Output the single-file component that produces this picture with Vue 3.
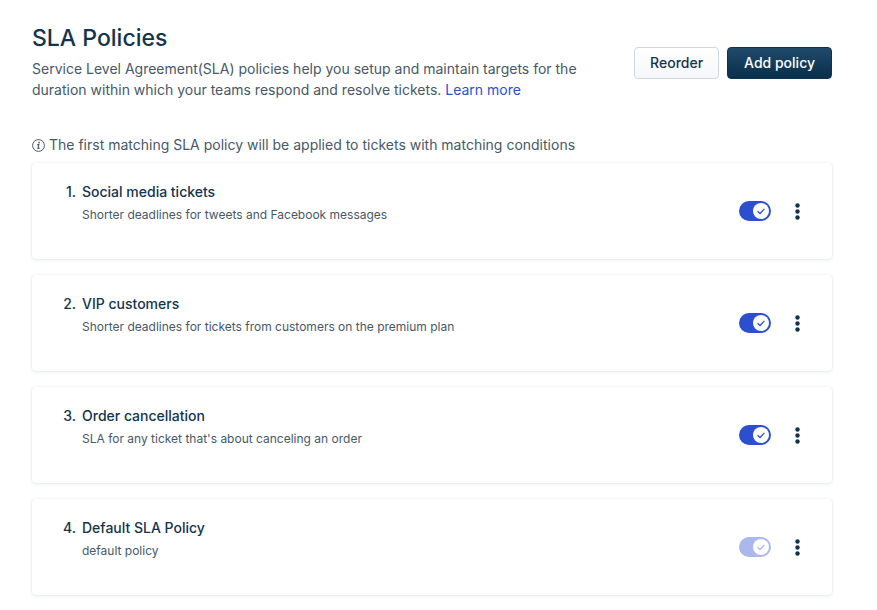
<script setup>
import { ref } from 'vue'

const policies = ref([
  { name: 'Social media tickets', description: 'Shorter deadlines for tweets and Facebook messages', enabled: true, locked: false },
  { name: 'VIP customers', description: 'Shorter deadlines for tickets from customers on the premium plan', enabled: true, locked: false },
  { name: 'Order cancellation', description: "SLA for any ticket that's about canceling an order", enabled: true, locked: false },
  { name: 'Default SLA Policy', description: 'default policy', enabled: true, locked: true }
])
</script>

<template>
  <main class="page">
    <header class="header">
      <div class="intro">
        <h1>SLA Policies</h1>
        <p>
          Service Level Agreement(SLA) policies help you setup and maintain targets for the
          duration within which your teams respond and resolve tickets.
          <a href="#">Learn more</a>
        </p>
      </div>
      <div class="actions">
        <button type="button" class="btn">Reorder</button>
        <button type="button" class="btn primary">Add policy</button>
      </div>
    </header>

    <p class="note">
      <svg width="13" height="13" viewBox="0 0 13 13" fill="none" stroke="currentColor" aria-hidden="true">
        <circle cx="6.5" cy="6.5" r="5.9" />
        <path d="M5.2 5.6h1.6L6 9.3h1.6" stroke-width="1.2" />
        <circle cx="7" cy="3.6" r=".9" fill="currentColor" stroke="none" />
      </svg>
      The first matching SLA policy will be applied to tickets with matching conditions
    </p>

    <ol class="list">
      <li v-for="(policy, i) in policies" :key="policy.name" class="card">
        <span class="number">{{ i + 1 }}.</span>
        <div class="text">
          <h2>{{ policy.name }}</h2>
          <p>{{ policy.description }}</p>
        </div>
        <label class="toggle">
          <input v-model="policy.enabled" type="checkbox" :disabled="policy.locked" :aria-label="policy.name" />
          <span class="track">
            <span class="knob">
              <svg width="10" height="10" viewBox="0 0 10 10" fill="none" stroke="currentColor" stroke-width="1.3" aria-hidden="true">
                <path d="M1.6 5.3 4 7.5 8.4 2.9" />
              </svg>
            </span>
          </span>
        </label>
        <button type="button" class="menu" :aria-label="'Actions for ' + policy.name">
          <svg width="6" height="18" viewBox="0 0 6 18" fill="currentColor" aria-hidden="true">
            <circle cx="3.5" cy="3.5" r="2.2" />
            <circle cx="3.5" cy="9.5" r="2.2" />
            <circle cx="3.5" cy="15.5" r="2.2" />
          </svg>
        </button>
      </li>
    </ol>
  </main>
</template>

<style>
body {
  background: #fff;
}
</style>

<style scoped>
.page {
  padding: 20px 45px 14px 32px;
  font-family: Inter, "Liberation Sans", sans-serif;
  font-size: 14px;
  color: #12344d;
}
h1, h2, p, ol {
  margin: 0;
  padding: 0;
}
.header {
  display: flex;
  justify-content: space-between;
  align-items: flex-start;
  gap: 24px;
}
.intro {
  max-width: 560px;
}
h1 {
  font-size: 23px;
  line-height: 36px;
  font-weight: 500;
}
.intro p {
  margin-top: 2px;
  line-height: 21px;
  color: #475867;
}
a {
  color: #2c4fd0;
  text-decoration: none;
}
.actions {
  display: flex;
  gap: 8px;
  padding-top: 27px;
}
.btn {
  height: 32px;
  padding: 0 15px;
  border: 1px solid #cfd7df;
  border-radius: 4px;
  background: linear-gradient(#fff, #f5f7f9);
  font: 500 14px/20px Inter, "Liberation Sans", sans-serif;
  color: #12344d;
  white-space: nowrap;
}
.primary {
  padding: 0 16px;
  border-color: #0c3350;
  background: linear-gradient(#21496a, #08304c);
  color: #fff;
}
.note {
  display: flex;
  align-items: center;
  gap: 4px;
  margin: 35px 0 8px;
  line-height: 20px;
  color: #475867;
}
.list {
  display: grid;
  gap: 16px;
  list-style: none;
}
.card {
  display: flex;
  align-items: center;
  min-height: 96px;
  border-radius: 4px;
  box-shadow: 0 0 2px rgba(18, 52, 77, 0.16), 0 2px 4px rgba(18, 52, 77, 0.05);
}
.number {
  width: 44px;
  margin-right: 6px;
  text-align: right;
  line-height: 20px;
  font-weight: 500;
}
.text {
  flex: 1;
}
h2 {
  font-size: 14px;
  line-height: 20px;
  font-weight: 500;
}
.text p {
  margin-top: 3px;
  font-size: 12px;
  line-height: 20px;
  color: #475867;
}
.number, .text {
  align-self: flex-start;
  margin-top: 19px;
}
.toggle {
  display: flex;
  position: relative;
}
.toggle input {
  position: absolute;
  inset: 0;
  width: 100%;
  height: 100%;
  margin: 0;
  opacity: 0;
}
.track {
  display: flex;
  align-items: center;
  width: 32px;
  height: 20px;
  padding: 2px;
  box-sizing: border-box;
  border-radius: 10px;
  background: #cfd7df;
}
.knob {
  display: grid;
  place-items: center;
  width: 16px;
  height: 16px;
  border-radius: 50%;
  background: #fff;
  color: #2c4fd0;
}
input:checked + .track {
  justify-content: flex-end;
  background: #2c4fd0;
}
input:disabled + .track {
  opacity: 0.4;
}
.menu {
  display: grid;
  place-items: center;
  width: 24px;
  height: 24px;
  margin: 0 23px 0 14px;
  padding: 0;
  border: 0;
  background: none;
  color: #0c3350;
}
</style>
